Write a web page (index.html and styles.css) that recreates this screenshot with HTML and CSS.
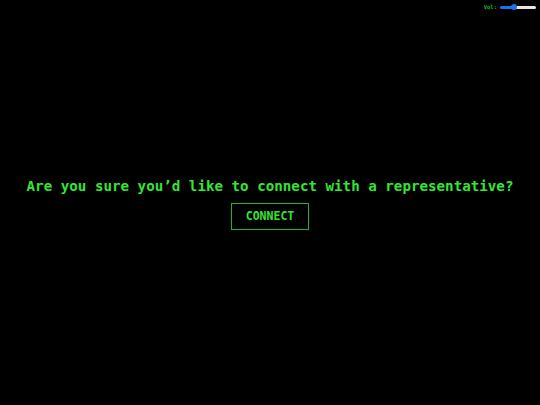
FILE: index.html
```html
<!DOCTYPE html>
<html lang="en">
<head>
    <meta charset="UTF-8">
    <meta name="viewport" content="width=device-width, initial-scale=1.0">
    <title>Connect</title>
    <link rel="stylesheet" href="styles.css">
</head>
<body>
    <div class="volume">
        <label for="vol">Vol:</label>
        <input type="range" id="vol" min="0" max="100" value="35">
    </div>
    <div class="container">
        <p class="question">Are you sure you’d like to connect with a representative?</p>
        <button class="connect">CONNECT</button>
    </div>
</body>
</html>
```

FILE: styles.css
```css
html, body {
    margin: 0;
    height: 100%;
    background: #000;
}

body {
    font-family: "DejaVu Sans Mono", "Liberation Mono", monospace;
    color: #33e633;
}

.volume {
    position: absolute;
    top: 2px;
    right: 4px;
    display: flex;
    align-items: center;
    gap: 3px;
}

.volume label {
    font-size: 5.5px;
    font-weight: bold;
    color: #1fb81f;
}

.volume input {
    -webkit-appearance: none;
    appearance: none;
    width: 36px;
    height: 10px;
    margin: 0;
    background: transparent;
}

.volume input::-webkit-slider-runnable-track {
    height: 3px;
    border-radius: 2px;
    background: linear-gradient(to right, #1a73e8 35%, #e6e6e6 35%);
}

.volume input::-webkit-slider-thumb {
    -webkit-appearance: none;
    width: 6px;
    height: 6px;
    margin-top: -1.5px;
    border-radius: 50%;
    background: #1a73e8;
}

.container {
    height: 100%;
    display: flex;
    flex-direction: column;
    align-items: center;
    justify-content: center;
    gap: 9px;
    padding-top: 2px;
    box-sizing: border-box;
}

.question {
    margin: 0;
    font-size: 14.2px;
    font-weight: bold;
    line-height: 16px;
}

.connect {
    width: 78px;
    height: 27px;
    background: #000;
    border: 1px solid #22b522;
    color: #33e633;
    font-family: inherit;
    font-size: 11.5px;
    font-weight: bold;
    cursor: pointer;
}
```
